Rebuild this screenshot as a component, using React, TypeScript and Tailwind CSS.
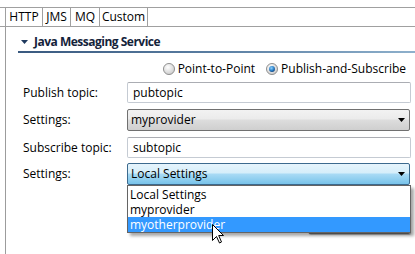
import React from 'react';

const font = { fontFamily: '"Open Sans", "Noto Sans", sans-serif' };

function Radio({ checked }: { checked?: boolean }) {
  return (
    <svg width="12" height="12" viewBox="0 0 13 13" className="shrink-0">
      <defs>
        <radialGradient id={checked ? 'rc' : 'ru'} cx="0.4" cy="0.35" r="0.7">
          <stop offset="0" stopColor="#ffffff" />
          <stop offset="1" stopColor="#c9c9c9" />
        </radialGradient>
        <radialGradient id="dot" cx="0.4" cy="0.35" r="0.7">
          <stop offset="0" stopColor="#8fd3ff" />
          <stop offset="0.6" stopColor="#2a7fc8" />
          <stop offset="1" stopColor="#0d3e77" />
        </radialGradient>
      </defs>
      <circle cx="6.5" cy="6.5" r="6" fill={checked ? 'url(#rc)' : 'url(#ru)'} stroke="#8a8a8a" strokeWidth="1" />
      {checked && <circle cx="6.5" cy="6.5" r="3.2" fill="url(#dot)" />}
    </svg>
  );
}

function Arrow() {
  return (
    <svg width="7" height="4" viewBox="0 0 7 4" className="shrink-0">
      <path d="M0 0h7L3.5 4z" fill="#000" />
    </svg>
  );
}

function TextField({ value }: { value: string }) {
  return (
    <div className="h-[21px] w-[284px] rounded-[2px] border border-[#c5cbd3] border-t-[#abadb3] bg-white flex items-center pl-[5px] text-black">
      {value}
    </div>
  );
}

function Combo({ value, open }: { value: string; open?: boolean }) {
  return (
    <div
      className={
        open
          ? 'h-[22px] w-[283px] rounded-[2px] border border-[#3c6a8e] bg-[linear-gradient(to_bottom,#e6f4fc_0%,#d5eefa_45%,#a9dbf5_50%,#78c3ea_100%)] flex items-center pl-[3px] pr-[4px]'
          : 'h-[22px] w-[283px] rounded-[2px] border border-[#707070] bg-[linear-gradient(to_bottom,#f2f2f2_0%,#ebebeb_45%,#dddddd_50%,#cfcfcf_100%)] flex items-center pl-[3px] pr-[4px]'
      }
    >
      <span className="flex-1 text-black">{value}</span>
      <Arrow />
    </div>
  );
}

function Row({ label, children, mt }: { label: string; children: React.ReactNode; mt: string }) {
  return (
    <div className={`flex items-center ${mt}`}>
      <div className="w-[121px] shrink-0 pl-[17px] whitespace-nowrap text-black">{label}</div>
      {children}
    </div>
  );
}

export default function App() {
  const tabs = [
    { name: 'HTTP', w: 'w-[37px]' },
    { name: 'JMS', w: 'w-[28px]' },
    { name: 'MQ', w: 'w-[29px]' },
    { name: 'Custom', w: 'w-[49px]' },
  ];
  return (
    <div className="relative w-[415px] h-[254px] overflow-hidden bg-white text-[12px] leading-[16px]" style={font}>
      <div className="pt-[7px]">
        <div className="h-[20px] border-y border-[#a0a0a0] flex pl-[5px]">
          {tabs.map((t) => (
            <div
              key={t.name}
              className={`${t.w} h-full border-l border-[#a0a0a0] last:border-r flex items-center justify-center text-black`}
            >
              {t.name}
            </div>
          ))}
        </div>
      </div>

      <div className="ml-[5px] border-l border-[#9c9c9c] h-[227px] relative">
        {/* Section header */}
        <div className="pt-[7px] pl-[14px] flex items-center h-[23px]">
          <svg width="7" height="4" viewBox="0 0 7 4" className="ml-[1px]">
            <path d="M0 0h7L3.5 4z" fill="#1f3a5f" />
          </svg>
          <span className="ml-[6px] font-bold tracking-[-0.5px] text-[#14233a]">Java Messaging Service</span>
        </div>
        <div className="ml-[12px] mt-[1px] h-[2px] bg-[linear-gradient(to_right,#39597f,#5a7ea2_50%,#8eb0cc)]" />

        {/* Radio row */}
        <div className="mt-[8px] h-[16px] flex items-center justify-end pr-[9px] text-black">
          <Radio />
          <span className="ml-[3px] mr-[11px]">Point-to-Point</span>
          <Radio checked />
          <span className="ml-[3px]">Publish-and-Subscribe</span>
        </div>

        <Row label="Publish topic:" mt="mt-[5px]">
          <TextField value="pubtopic" />
        </Row>
        <Row label="Settings:" mt="mt-[6px]">
          <Combo value="myprovider" />
        </Row>
        <Row label="Subscribe topic:" mt="mt-[6px]">
          <TextField value="subtopic" />
        </Row>
        <Row label="Settings:" mt="mt-[5px]">
          <Combo value="Local Settings" open />
        </Row>

        {/* button hidden behind list */}
        <div className="absolute left-[302px] top-[185px] w-[102px] h-[22px] rounded-[2px] border border-[#707070] bg-[#e3e3e3] shadow-[1px_1px_1px_rgba(0,0,0,0.3)]" />

        {/* dropdown list */}
        <div className="absolute left-[121px] top-[158px] w-[284px] border border-[#646464] bg-white pt-[1px] shadow-[3px_3px_3px_rgba(0,0,0,0.35)]">
          <div className="h-[15px] leading-[15px] pl-[2px] text-black">Local Settings</div>
          <div className="h-[15px] leading-[15px] pl-[2px] text-black">myprovider</div>
          <div className="h-[15px] leading-[15px] pl-[2px] bg-[#3399ff] text-white">myotherprovider</div>
        </div>

        {/* mouse pointer */}
        <svg className="absolute left-[206px] top-[197px]" width="13" height="20" viewBox="0 0 13 20">
          <path d="M0.5 0.5V16.5L4.5 12.5L7.5 19L9.5 18L6.7 11.5H11.5Z" fill="#fff" stroke="#000" strokeWidth="1" strokeLinejoin="miter" />
        </svg>
      </div>
    </div>
  );
}
